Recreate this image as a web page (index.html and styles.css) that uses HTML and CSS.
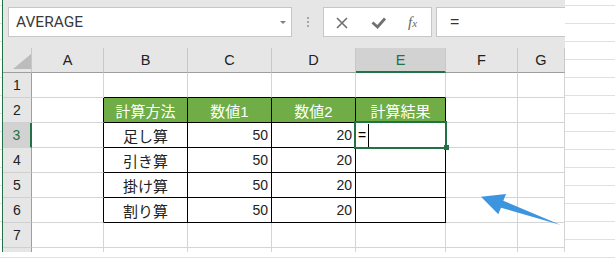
FILE: index.html
```html
<!DOCTYPE html>
<html lang="ja">
<head>
  <meta charset="UTF-8" />
  <title>計算方法</title>
  <link rel="stylesheet" href="styles.css">
</head>
<body>
  <div class="window">
    <div class="topbar">
      <div class="namebox">
        <span class="name">AVERAGE</span>
        <span class="drop"></span>
      </div>
      <div class="grip"><i></i><i></i><i></i></div>
      <div class="btnbox">
        <svg width="107" height="28" viewBox="0 0 107 28">
          <path d="M13 10 L23 20 M23 10 L13 20" stroke="#6e6e6e" stroke-width="1.6" fill="none"/>
          <path d="M48.5 14.5 L53.5 19 L61 10.5" stroke="#707070" stroke-width="2.8" fill="none"/>
          <text x="84" y="19" class="fx">f<tspan font-size="11">x</tspan></text>
        </svg>
      </div>
      <div class="formula">=</div>
    </div>

    <div class="grid">
      <div class="corner"><span class="tri"></span></div>
      <div class="hd">A</div>
      <div class="hd">B</div>
      <div class="hd">C</div>
      <div class="hd">D</div>
      <div class="hd sel">E</div>
      <div class="hd">F</div>
      <div class="hd">G</div>

      <div class="rh">1</div>
      <div></div>
      <div class="tt"></div>
      <div class="tt"></div>
      <div class="tt"></div>
      <div class="tt"></div>
      <div></div>
      <div></div>

      <div class="rh">2</div>
      <div class="tl"></div>
      <div class="t th">計算方法</div>
      <div class="t th">数値1</div>
      <div class="t th">数値2</div>
      <div class="t th">計算結果</div>
      <div></div>
      <div></div>

      <div class="rh sel">3</div>
      <div class="tl"></div>
      <div class="t txt">足し算</div>
      <div class="t num">50</div>
      <div class="t num">20</div>
      <div class="t active">
        <span class="eq">=</span><span class="caret"></span>
        <span class="selbox"><span class="handle"></span></span>
      </div>
      <div></div>
      <div></div>

      <div class="rh">4</div>
      <div class="tl"></div>
      <div class="t txt">引き算</div>
      <div class="t num">50</div>
      <div class="t num">20</div>
      <div class="t"></div>
      <div></div>
      <div></div>

      <div class="rh">5</div>
      <div class="tl"></div>
      <div class="t txt">掛け算</div>
      <div class="t num">50</div>
      <div class="t num">20</div>
      <div class="t"></div>
      <div></div>
      <div></div>

      <div class="rh">6</div>
      <div class="tl"></div>
      <div class="t txt">割り算</div>
      <div class="t num">50</div>
      <div class="t num">20</div>
      <div class="t"></div>
      <div></div>
      <div></div>

      <div class="rh">7</div>
      <div></div>
      <div></div>
      <div></div>
      <div></div>
      <div></div>
      <div></div>
      <div></div>

      <div class="rh"></div>
      <div></div>
      <div></div>
      <div></div>
      <div></div>
      <div></div>
      <div></div>
      <div></div>
    </div>

    <!-- 矢印 -->
    <svg class="arrow" width="562" height="252" viewBox="0 0 562 252">
      <polygon points="478,196.7 503,194 500.3,200.7 557.7,225 498,207.7 495.3,214.3" fill="#3d95e0"/>
    </svg>
  </div>
</body>
</html>
```

FILE: styles.css
```css
* { box-sizing: border-box; }

body {
  margin: 0;
  font-family: "Liberation Sans", "Noto Sans CJK JP", sans-serif;
  background: repeating-linear-gradient(#fff 0, #fff 5px, #d8eac3 5px, #d8eac3 6px, #fff 6px, #fff 18px);
}

.window {
  position: relative;
  margin-left: 2px;
  width: 563px;
  height: 252px;
  border-left: 1px solid #217346;
  background: #e6e6e6;
  overflow: hidden;
}

/* 数式バー */
.topbar {
  display: flex;
  align-items: flex-start;
  height: 48px;
  padding-top: 7px;
}

.topbar > * { flex-shrink: 0; }

.namebox {
  display: flex;
  align-items: center;
  margin-left: 5px;
  width: 284px;
  height: 30px;
  padding-left: 7px;
  background: #fff;
  border: 1px solid #c6c6c6;
}

.name {
  font-family: Roboto, sans-serif;
  font-size: 15.5px;
  color: #3a3a3a;
}

.drop {
  margin-left: auto;
  margin-right: 5px;
  border-left: 3.5px solid transparent;
  border-right: 3.5px solid transparent;
  border-top: 3px solid #808080;
}

.grip {
  display: flex;
  flex-direction: column;
  gap: 2px;
  margin: 10px 0 0 15px;
}

.grip i {
  width: 2px;
  height: 2px;
  background: #a6a6a6;
}

.btnbox {
  margin-left: 14px;
  width: 109px;
  height: 30px;
  background: #fff;
  border: 1px solid #c6c6c6;
}

.btnbox svg { display: block; }

.fx {
  font-family: "Liberation Serif", serif;
  font-style: italic;
  font-size: 15px;
  fill: #666;
}

.formula {
  display: flex;
  align-items: center;
  margin-left: 4px;
  width: 220px;
  height: 30px;
  padding-left: 13px;
  background: #fff;
  border: 1px solid #c6c6c6;
  font-size: 16px;
  color: #333;
}

/* シート */
.grid {
  display: grid;
  grid-template-columns: 29px 72px 84px 84px 84px 90px 72px 47px;
  grid-auto-rows: 25px;
}

.grid > div {
  display: flex;
  align-items: center;
  background: #fff;
  border-right: 1px solid #d4d4d4;
  border-bottom: 1px solid #d4d4d4;
  font-size: 14px;
  color: #000;
}

.grid > .corner {
  justify-content: flex-end;
  align-items: flex-end;
  padding-bottom: 3px;
  background: #e6e6e6;
  border-right-color: #c8c8c8;
  border-bottom-color: #9e9e9e;
}

.tri {
  width: 0;
  height: 0;
  border-left: 18px solid transparent;
  border-bottom: 15px solid #bcbcbc;
}

.grid > .hd {
  justify-content: center;
  background: #e6e6e6;
  border-right-color: #c8c8c8;
  border-bottom-color: #9e9e9e;
  font-size: 14.5px;
  color: #222;
}

.grid > .hd.sel {
  background: #d2d2d2;
  border-bottom: 2px solid #217346;
  color: #217346;
}

.grid > .rh {
  justify-content: center;
  background: #e6e6e6;
  border-right-color: #9e9e9e;
  border-bottom-color: #d0d0d0;
  color: #222;
}

.grid > .rh.sel {
  background: #d2d2d2;
  border-right: 2px solid #217346;
  color: #217346;
}

/* 表の罫線 */
.grid > .tl { border-right-color: #000; }
.grid > .tt { border-bottom-color: #000; }

.grid > .t {
  border-right-color: #000;
  border-bottom-color: #000;
}

.grid > .th {
  justify-content: center;
  background: #70ad47;
  color: #fff;
  font-size: 15px;
}

.grid > .txt {
  justify-content: center;
  font-size: 15px;
  color: #222;
}

.grid > .num {
  justify-content: flex-end;
  padding-right: 3px;
  color: #222;
}

.active {
  position: relative;
  padding-left: 2px;
}

.eq { font-size: 14px; }

.caret {
  margin-left: 2px;
  width: 1px;
  height: 23px;
  background: #000;
}

.selbox {
  position: absolute;
  left: -2px;
  top: -2px;
  right: -2px;
  bottom: -2px;
  border: 2px solid #217346;
}

.handle {
  position: absolute;
  right: -4px;
  bottom: -3px;
  width: 5px;
  height: 5px;
  background: #217346;
}

.arrow {
  position: absolute;
  left: 0;
  top: 0;
}
```
